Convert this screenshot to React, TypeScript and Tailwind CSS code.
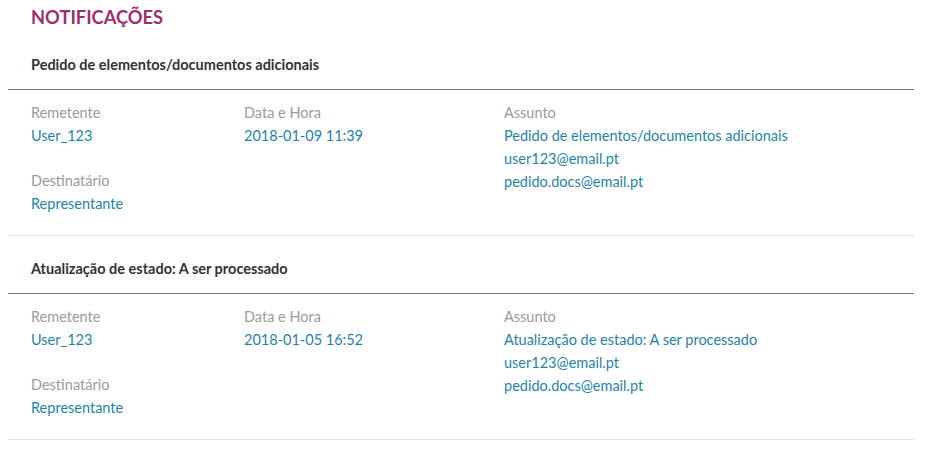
const notifications = [
  {
    title: 'Pedido de elementos/documentos adicionais',
    sender: 'User_123',
    date: '2018-01-09 11:39',
    recipient: 'Representante',
    subject: ['Pedido de elementos/documentos adicionais', 'user123@email.pt', 'pedido.docs@email.pt'],
  },
  {
    title: 'Atualização de estado: A ser processado',
    sender: 'User_123',
    date: '2018-01-05 16:52',
    recipient: 'Representante',
    subject: ['Atualização de estado: A ser processado', 'user123@email.pt', 'pedido.docs@email.pt'],
  },
];

export default function App() {
  return (
    <div className="min-h-screen bg-white font-['Lato','Open_Sans',sans-serif]">
      <div className="w-[906px] ml-[8px]">
        {/* Page title */}
        <h1 className="pl-[23px] pt-[4px] pb-[2px] text-[18.3px] leading-[26px] font-bold text-[#9c2f6e]">
          NOTIFICAÇÕES
        </h1>

        {notifications.map((n, index) => (
          <div key={index} className="border-b border-[#e2e2e2]">
            {/* Header */}
            <div className="pl-[23px] pt-[21px] pb-[13px] text-[14.5px] leading-[23px] font-bold text-[#333333] border-b border-[#777777]">
              {n.title}
            </div>

            {/* Details */}
            <div className="pl-[23px] pt-[11px] pb-[20px] grid grid-cols-[213px_260px_1fr] text-[14.5px] leading-[23px]">
              <div>
                <div className="text-[#9a9a9a]">Remetente</div>
                <div className="text-[#1f83a8]">{n.sender}</div>
                <div className="mt-[22px] text-[#9a9a9a]">Destinatário</div>
                <div className="text-[#1f83a8]">{n.recipient}</div>
              </div>
              <div>
                <div className="text-[#9a9a9a]">Data e Hora</div>
                <div className="text-[#1f83a8]">{n.date}</div>
              </div>
              <div>
                <div className="text-[#9a9a9a]">Assunto</div>
                {n.subject.map((line, idx) => (
                  <div key={idx} className="text-[#1f83a8]">{line}</div>
                ))}
              </div>
            </div>
          </div>
        ))}
      </div>
    </div>
  );
}
